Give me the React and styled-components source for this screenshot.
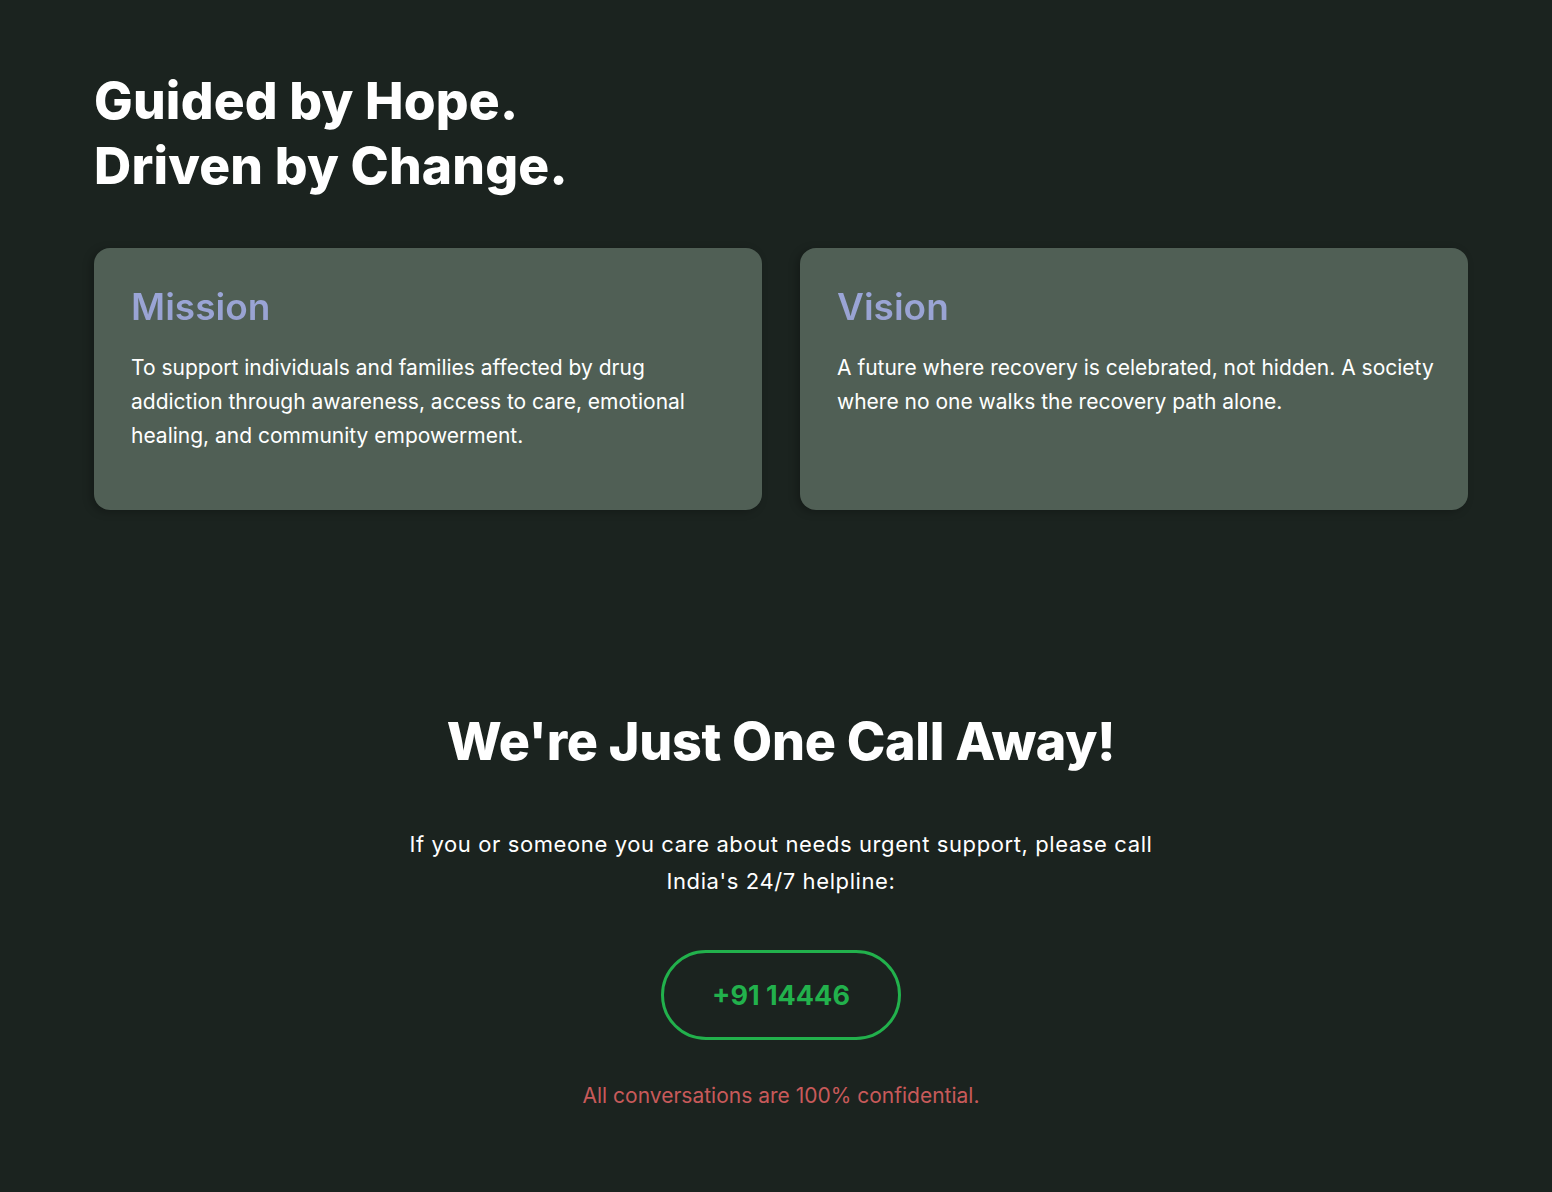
import React from 'react';
import styled, { createGlobalStyle } from 'styled-components';

const GlobalStyle = createGlobalStyle`
  html, body {
    margin: 0;
    padding: 0;
    background: #1b231f;
  }
  body {
    font-family: Inter, "Open Sans", sans-serif;
    color: #ffffff;
  }
  * { box-sizing: border-box; }
`;

const App = () => {
  return (
    <Page>
      <GlobalStyle />
      <AboutSection>
        <Headline>
          Guided by Hope.
          <br />
          Driven by Change.
        </Headline>
        <CardGrid>
          <Card>
            <CardTitle>Mission</CardTitle>
            <CardText>
              To support individuals and families affected by drug addiction through awareness,
              access to care, emotional healing, and community empowerment.
            </CardText>
          </Card>
          <Card>
            <CardTitle>Vision</CardTitle>
            <CardText>
              A future where recovery is celebrated, not hidden. A society where no one walks the
              recovery path alone.
            </CardText>
          </Card>
        </CardGrid>
      </AboutSection>

      <HelplineSection>
        <HelplineTitle>We're Just One Call Away!</HelplineTitle>
        <HelplineText>
          If you or someone you care about needs urgent support, please call India's 24/7 helpline:
        </HelplineText>
        <CallButton href="tel:+9114446">+91 14446</CallButton>
        <Note>All conversations are 100% confidential.</Note>
      </HelplineSection>
    </Page>
  );
};

export default App;

// Styled Components

const Page = styled.main`
  min-height: 1192px;
  background: #1b231f;
  padding: 0 84px 0 94px;
`;

const AboutSection = styled.section`
  padding-top: 68px;
`;

const Headline = styled.h1`
  margin: 0 0 50px;
  font-size: 51.5px;
  line-height: 65px;
  font-weight: 800;
  letter-spacing: 0.2px;
  color: #ffffff;
`;

const CardGrid = styled.div`
  display: grid;
  grid-template-columns: 1fr 1fr;
  gap: 38px;
`;

const Card = styled.div`
  min-height: 262px;
  padding: 36px 30px 36px 37px;
  background: #505f55;
  border-radius: 16px;
  box-shadow: -3px 2px 8px rgba(0, 0, 0, 0.25);
`;

const CardTitle = styled.h2`
  display: inline-block;
  margin: 0 0 21px;
  font-size: 37px;
  line-height: 46px;
  font-weight: 600;
  background: linear-gradient(180deg, #9ba6d9 0%, #99a3d2 75%, #7f8aa8 100%);
  -webkit-background-clip: text;
  background-clip: text;
  color: transparent;
`;

const CardText = styled.p`
  margin: 0;
  font-size: 21px;
  line-height: 34px;
  color: #ffffff;
`;

const HelplineSection = styled.section`
  display: flex;
  flex-direction: column;
  align-items: center;
  padding-top: 200px;
  text-align: center;
`;

const HelplineTitle = styled.h2`
  margin: 0 0 52px;
  font-size: 52px;
  line-height: 64px;
  font-weight: 800;
  letter-spacing: -0.3px;
  color: #ffffff;
`;

const HelplineText = styled.p`
  max-width: 770px;
  margin: 0 0 50px;
  font-size: 22px;
  line-height: 37px;
  letter-spacing: 0.6px;
  color: #ffffff;
`;

const CallButton = styled.a`
  display: flex;
  align-items: center;
  justify-content: center;
  width: 240px;
  height: 90px;
  border: 3px solid #22b14c;
  border-radius: 45px;
  font-size: 27px;
  font-weight: 700;
  color: #22b14c;
  text-decoration: none;
`;

const Note = styled.p`
  margin: 42px 0 0;
  font-size: 21px;
  line-height: 28px;
  color: #c85a5a;
`;
